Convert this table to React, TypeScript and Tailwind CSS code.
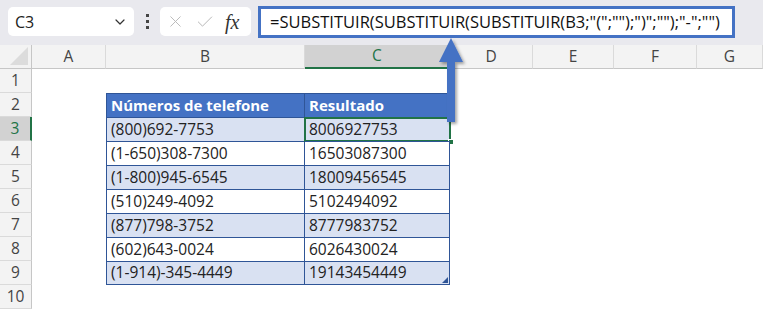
import { ChevronDown, X, Check } from 'lucide-react'

const cols = ['A', 'B', 'C', 'D', 'E', 'F', 'G']
const colTemplate = 'grid grid-cols-[32px_74px_199px_145px_83px_81px_83px_66px]'

const rows = [
  { phone: '(800)692-7753', result: '8006927753' },
  { phone: '(1-650)308-7300', result: '16503087300' },
  { phone: '(1-800)945-6545', result: '18009456545' },
  { phone: '(510)249-4092', result: '5102494092' },
  { phone: '(877)798-3752', result: '8777983752' },
  { phone: '(602)643-0024', result: '6026430024' },
  { phone: '(1-914)-345-4449', result: '19143454449' },
]

function RowHead({ n, active }: { n: number; active?: boolean }) {
  return (
    <div
      className={`h-[24px] flex items-center justify-center border-b border-[#dadada] text-[15.5px] ${
        active ? 'bg-[#d2d2d2] text-[#217346] border-r-2 border-r-[#217346]' : 'bg-[#f3f3f3] text-[#444] border-r border-r-[#c6c6c6]'
      }`}
    >
      {n}
    </div>
  )
}

function Empty() {
  return <div className="h-[24px] bg-white" />
}

export default function App() {
  return (
    <div className="relative w-[763px] h-[309px] overflow-hidden bg-white font-['Open_Sans','Noto_Sans',sans-serif] text-[#222]">
      {/* formula bar */}
      <div className="h-[45px] bg-[#e9e9ee] flex items-start pt-[6px]">
        <div className="ml-[8px] mt-[1px] w-[126px] h-[29px] bg-white rounded-[5px] flex items-center justify-between pl-[7px] pr-[6px] text-[16px]">
          <span>C3</span>
          <ChevronDown size={16} strokeWidth={1.8} className="text-[#333]" />
        </div>
        <div className="w-[26px] h-[30px] flex flex-col items-center justify-center gap-[3px]">
          <span className="w-[3px] h-[3px] bg-[#444]" />
          <span className="w-[3px] h-[3px] bg-[#444]" />
          <span className="w-[3px] h-[3px] bg-[#444]" />
        </div>
        <div className="mt-[1px] w-[91px] h-[29px] bg-white rounded-[5px] flex items-center pl-[6px] gap-[10px]">
          <X size={19} strokeWidth={1.2} className="text-[#b8b8b8]" />
          <Check size={20} strokeWidth={1.2} className="text-[#b8b8b8]" />
          <span className="font-['Liberation_Serif',serif] italic text-[20px] text-[#333] leading-none">fx</span>
        </div>
        <div className="ml-[7px] w-[477px] h-[32px] bg-white border-[3px] border-[#4472c4] flex items-center pl-[9px] text-[16.5px] text-[#111] whitespace-nowrap">
          =SUBSTITUIR(SUBSTITUIR(SUBSTITUIR(B3;"(";"");")";"");"-";"")
        </div>
      </div>

      {/* column headers */}
      <div className={colTemplate}>
        <div className="h-[24px] bg-[#f3f3f3] border-r border-b border-[#c6c6c6] flex items-end justify-end pr-[3px] pb-[3px]">
          <svg width="18" height="18" viewBox="0 0 18 18">
            <polygon points="18,0 18,18 0,18" fill="#dcdcdc" />
          </svg>
        </div>
        {cols.map(c => (
          <div
            key={c}
            className={`h-[24px] flex items-center justify-center text-[15.5px] ${
              c === 'C'
                ? 'bg-[#d2d2d2] text-[#217346] border-b-2 border-b-[#217346] border-r border-r-[#c6c6c6]'
                : 'bg-[#f3f3f3] text-[#444] border-b border-b-[#c6c6c6] border-r border-r-[#dadada]'
            }`}
          >
            {c}
          </div>
        ))}
      </div>

      {/* sheet rows */}
      <div className={colTemplate}>
        <RowHead n={1} />
        {cols.map(c => (
          <Empty key={c} />
        ))}

        <RowHead n={2} />
        <Empty />
        <div className="h-[24px] bg-[#4472c4] text-white font-bold text-[15px] flex items-center pl-[4px] border-l border-t border-r border-[#2f5597]">
          Números de telefone
        </div>
        <div className="h-[24px] bg-[#4472c4] text-white font-bold text-[15px] flex items-center pl-[4px] border-t border-r border-[#2f5597]">
          Resultado
        </div>
        <Empty />
        <Empty />
        <Empty />
        <Empty />

        {rows.map((r, i) => {
          const shade = i % 2 === 0 ? 'bg-[#d9e1f2]' : 'bg-white'
          return [
            <RowHead key={`h${i}`} n={i + 3} active={i === 0} />,
            <Empty key={`a${i}`} />,
            <div
              key={`b${i}`}
              className={`h-[24px] ${shade} text-[15.5px] flex items-center pl-[4px] border-l border-t border-r border-[#2f5597] ${
                i === rows.length - 1 ? 'border-b' : ''
              }`}
            >
              {r.phone}
            </div>,
            <div
              key={`c${i}`}
              className={`relative h-[24px] ${shade} text-[15.5px] flex items-center pl-[4px] border-t border-r border-[#2f5597] ${
                i === rows.length - 1 ? 'border-b' : ''
              }`}
            >
              {r.result}
              {i === 0 && (
                <>
                  <div className="absolute -left-[1px] -top-[1px] right-[-2px] bottom-[-1px] border-2 border-[#217346]" />
                  <div className="absolute right-[-5px] bottom-[-4px] w-[6px] h-[6px] bg-[#217346] border border-white" />
                </>
              )}
              {i === rows.length - 1 && (
                <svg className="absolute right-[1px] bottom-[1px]" width="6" height="6" viewBox="0 0 6 6">
                  <polygon points="6,0 6,6 0,6" fill="#2f5597" />
                </svg>
              )}
            </div>,
            <Empty key={`d${i}`} />,
            <Empty key={`e${i}`} />,
            <Empty key={`f${i}`} />,
            <Empty key={`g${i}`} />,
          ]
        })}

        <RowHead n={10} />
        {cols.map(c => (
          <Empty key={c} />
        ))}
      </div>

      {/* callout arrow from the result cell up to the formula */}
      <svg className="absolute left-[436px] top-[36px]" width="32" height="92" viewBox="0 0 32 92">
        <defs>
          <filter id="arrowShadow" x="-50%" y="-20%" width="200%" height="140%">
            <feDropShadow dx="2" dy="2" stdDeviation="1.5" floodColor="#000" floodOpacity="0.35" />
          </filter>
        </defs>
        <path d="M15 2 L27 26 L19 26 L19 86 L11 86 L11 26 L3 26 Z" fill="#4472c4" filter="url(#arrowShadow)" />
      </svg>
    </div>
  )
}
